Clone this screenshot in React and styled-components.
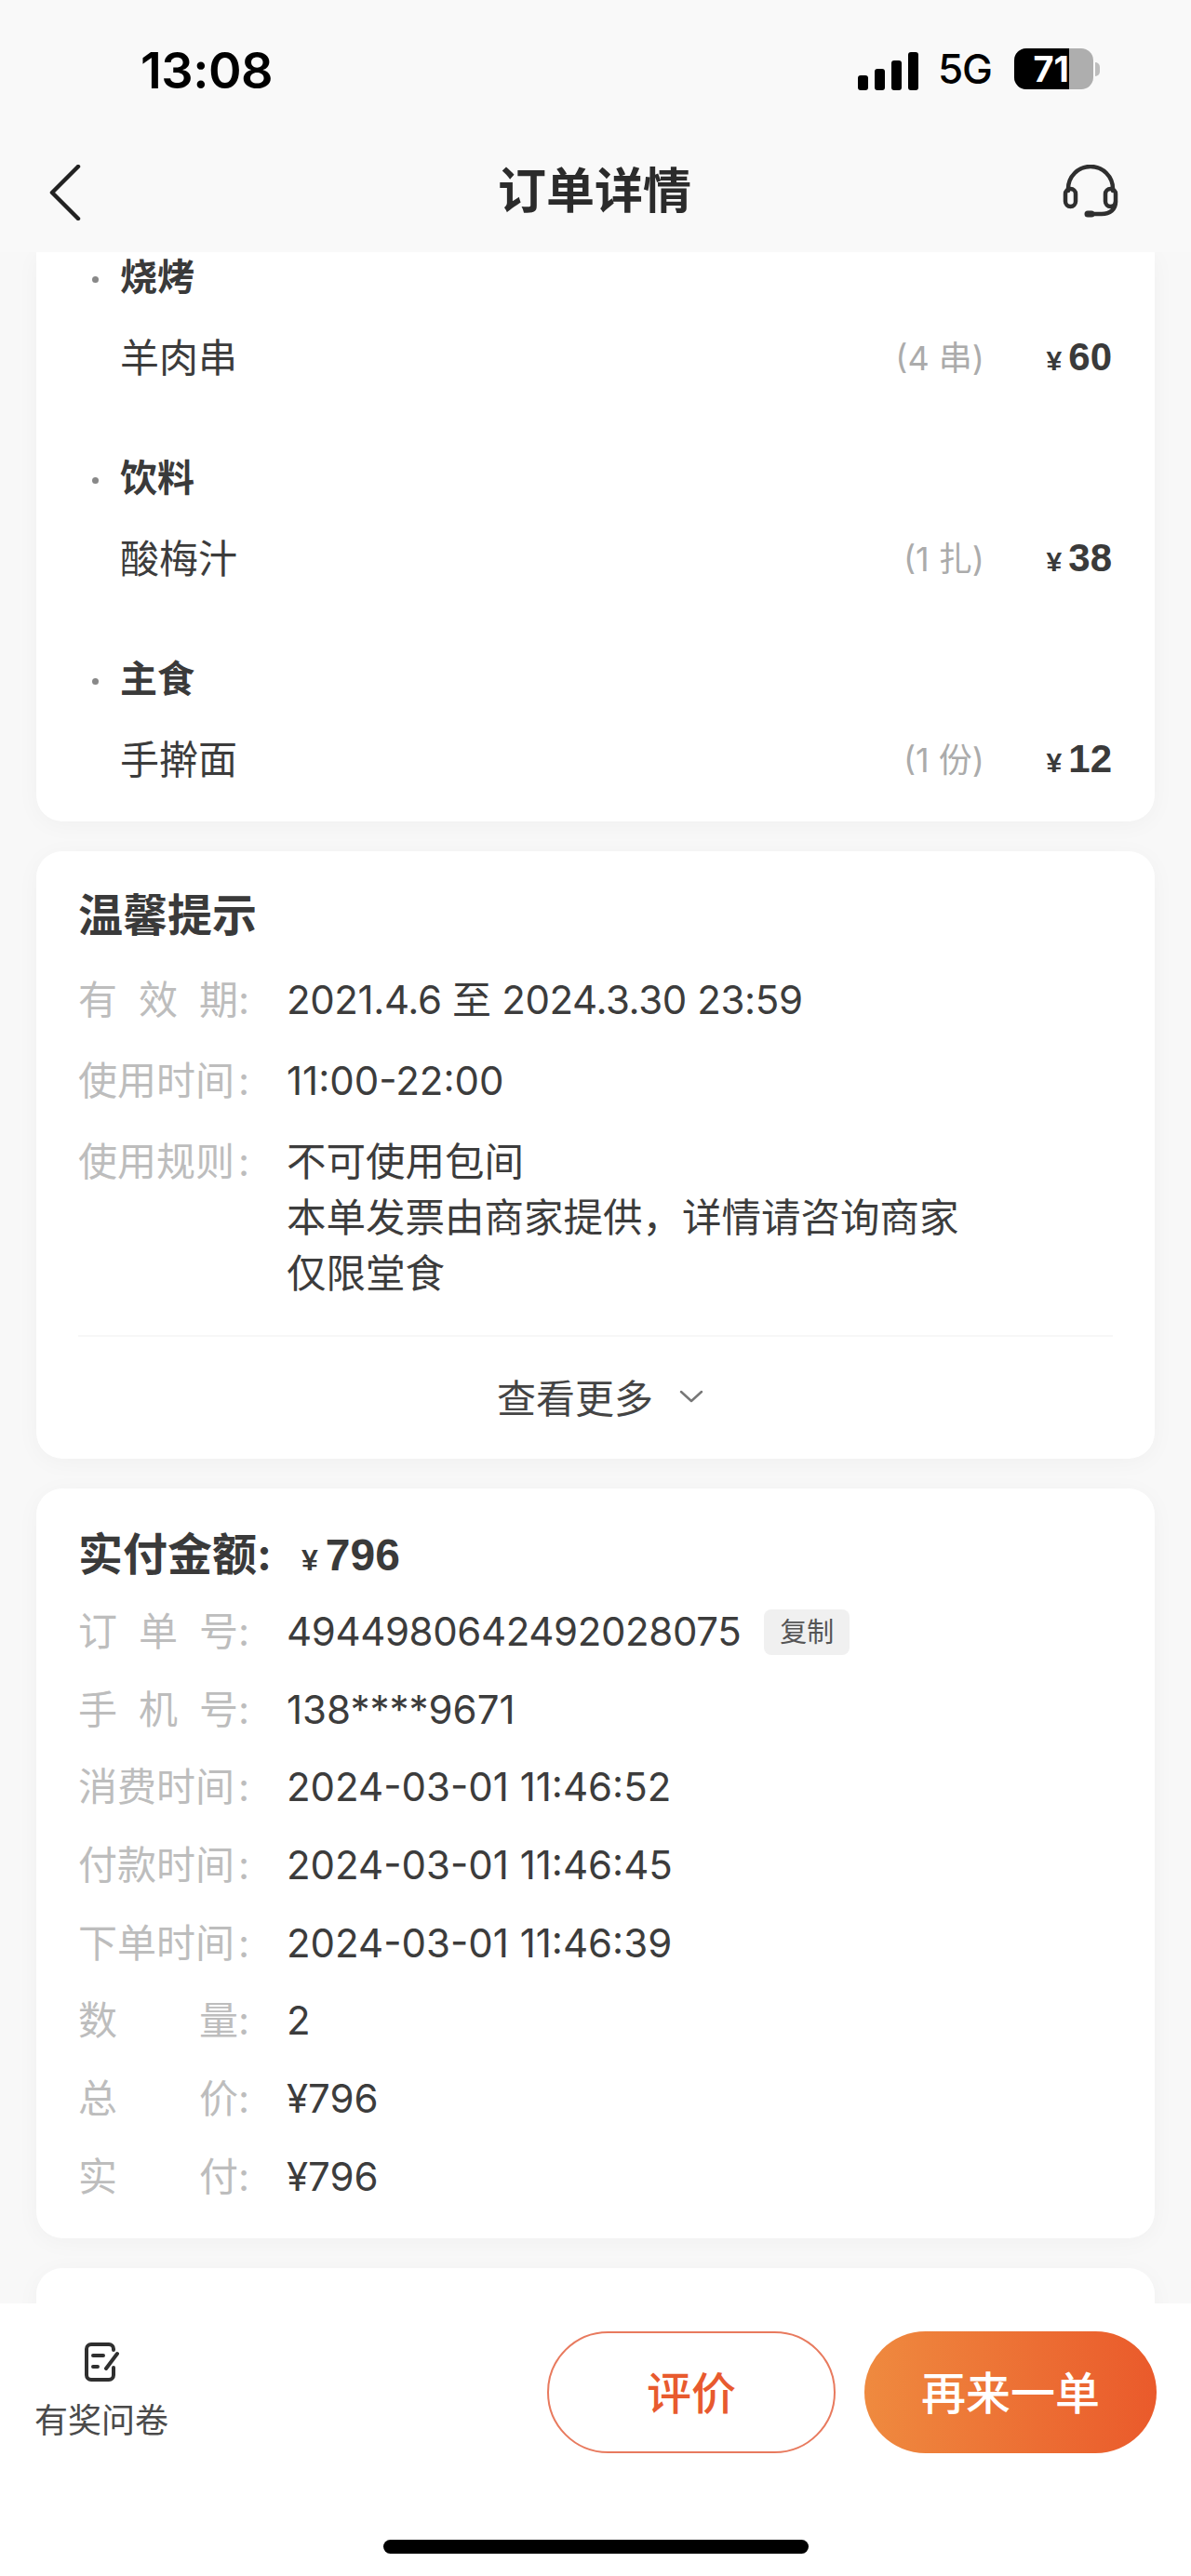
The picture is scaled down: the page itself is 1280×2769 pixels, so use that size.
import React from "react";
import styled, { createGlobalStyle } from "styled-components";

const Global = createGlobalStyle`
  html, body { margin: 0; padding: 0; background: #f8f8f8; }
  * { box-sizing: border-box; }
  body { font-family: Inter, "Noto Sans CJK SC", sans-serif; color: #333; }
`;
const Page = styled.div`
  width: 1280px; height: 2769px; display: flex; flex-direction: column; overflow: hidden; background: #f8f8f8;
`;
const StatusBar = styled.div`
  height: 150px; flex: none; padding: 50px 98px 0 151px; display: flex; justify-content: space-between; align-items: flex-start; background: #f9f9f9;
`;
const Clock = styled.div`
  font-size: 54px; line-height: 52px; font-weight: 600; color: #000; letter-spacing: -0.5px;
`;
const StatusRight = styled.div`
  display: flex; align-items: center; height: 54px; margin-top: -3px;
`;
const Bars = styled.div`
  display: flex; align-items: flex-end; gap: 7px; height: 41px; margin-top: 4px;
`;
const Bar = styled.i`
  display: block; width: 11px; height: ${p => p.$h}px; background: #000; border-radius: 3px;
`;
const Network = styled.span`
  margin-left: 21px; font-size: 44px; line-height: 44px; color: #000; font-weight: 500; letter-spacing: -1px;
`;
const Battery = styled.div`
  margin-left: 24px; position: relative; width: 85px; height: 44px; border-radius: 13px; overflow: hidden; background: #aeaeae;
`;
const BatteryFill = styled.div`
  width: 59px; height: 44px; background: #000; color: #fff; font-size: 38px; line-height: 44px; font-weight: 700; text-align: right; white-space: nowrap; overflow: hidden;
`;
const Nub = styled.i`
  display: block; width: 5px; height: 15px; margin-left: 2px; background: #bdbdbd; border-radius: 0 8px 8px 0;
`;
const Nav = styled.div`
  height: 121px; flex: none; position: relative; display: flex; align-items: flex-start; justify-content: space-between; padding: 27px 78px 0 53px; background: #f9f9f9;
`;
const NavTitle = styled.div`
  position: absolute; left: 0; right: 0; top: 26px; text-align: center; font-size: 52px; line-height: 60px; font-weight: 700; color: #2b2b2b; padding-right: 2px;
`;
const Scroll = styled.div`
  flex: 1; min-height: 0; overflow: hidden; padding: 0 39px; display: flex; flex-direction: column; gap: 32px; background: #f8f8f8;
`;
const Card = styled.section`
  flex: none; background: #fff; border-radius: ${p => (p.$flat ? "0 0 28px 28px" : "28px")}; box-shadow: 0 4px 26px rgba(0,0,0,.035); padding: ${p => p.$pad};
`;
const Group = styled.div`
  & + & { margin-top: 72px; }
`;
const GroupTitle = styled.div`
  position: relative; padding-left: 90px; font-size: 40px; line-height: 54px; font-weight: 700; color: #3a3a3a;
  &::before { content: ""; position: absolute; left: 60px; top: 26px; width: 7px; height: 7px; border-radius: 50%; background: #888; }
`;
const ItemRow = styled.div`
  margin-top: 30px; padding: 0 46px 0 90px; height: 60px; display: flex; align-items: center; font-size: 42px; line-height: 60px; color: #3c3c3c;
`;
const ItemName = styled.span`
  flex: 1;
`;
const Qty = styled.span`
  font-size: 36px; color: #ababab;
`;
const Price = styled.span`
  width: 137px; padding-top: 2px; text-align: right; font-family: "Liberation Sans", "Noto Sans CJK SC", sans-serif; font-weight: 700; font-size: 42px; color: #3a3a3a;
`;
const Yen = styled.span`
  font-size: ${p => p.$s || 30}px; margin-right: ${p => p.$m || 7}px; font-weight: 700;
`;
const CardTitle = styled.div`
  font-size: 48px; line-height: 60px; font-weight: 700; color: #3a3a3a; display: flex; align-items: baseline;
`;
const Amount = styled.span`
  margin-left: 32px; display: inline-flex; align-items: baseline; font-family: "Liberation Sans", "Noto Sans CJK SC", sans-serif;
`;
const Row = styled.div`
  display: flex; margin-top: ${p => p.$gap}px; font-size: 42px; line-height: 60px;
`;
const Label = styled.div`
  width: 224px; flex: none; display: flex; justify-content: flex-start; color: #bdbdbd;
`;
const LabelText = styled.span`
  width: ${p => (p.$wide ? 168 : 172)}px; margin-right: ${p => (p.$wide ? 4 : 0)}px; text-align-last: justify; white-space: nowrap;
`;
const Value = styled.div`
  display: flex; align-items: center; color: #3c3c3c; letter-spacing: ${p => (p.$tight ? "-0.38px" : "0")};
`;
const Lines = styled.div`
  color: #3c3c3c; font-size: 42.5px;
`;
const Copy = styled.span`
  margin-left: 25px; width: 92px; height: 49px; border-radius: 8px; background: #f0f0f0; color: #555; font-size: 29px; line-height: 49px; text-align: center; letter-spacing: 0;
`;
const Divider = styled.div`
  height: 2px; margin-top: 36px; background: #f7f7f7;
`;
const More = styled.div`
  height: 131px; display: flex; align-items: center; justify-content: center; gap: 28px; font-size: 42px; color: #444; padding: 0 0 4px 10px;
`;
const Footer = styled.div`
  flex: none; height: 293px; position: relative; background: #fff; padding: 30px 37px 0 37px; display: flex; align-items: flex-start; justify-content: space-between;
`;
const Survey = styled.div`
  margin-top: 12px; display: flex; flex-direction: column; align-items: center; font-size: 36px; line-height: 44px; color: #4a4a4a; gap: 20px;
`;
const Buttons = styled.div`
  display: flex; gap: 31px;
`;
const Button = styled.div`
  width: ${p => p.$w}px; height: 131px; border-radius: 66px; display: flex; align-items: center; justify-content: center; padding-bottom: 5px; font-size: 48px; font-weight: 500;
  color: ${p => (p.$primary ? "#fff" : "#e85a2e")};
  background: ${p => (p.$primary ? "linear-gradient(90deg,#ef8a3f,#ea5a2b)" : "#fff")};
  border: ${p => (p.$primary ? "none" : "2px solid #e87a5e")};
`;
const HomeBar = styled.div`
  position: absolute; left: 412px; top: 254px; width: 457px; height: 15px; border-radius: 8px; background: #000;
`;
const Stub = styled.div`
  height: 120px;
`;

const items = [
  { t: "烧烤", n: "羊肉串", q: "(4 串)", p: "60" },
  { t: "饮料", n: "酸梅汁", q: "(1 扎)", p: "38" },
  { t: "主食", n: "手擀面", q: "(1 份)", p: "12" },
];
const orderRows = [
  ["订单号", "4944980642492028075", true],
  ["手机号", "138****9671"],
  ["消费时间", "2024-03-01 11:46:52"],
  ["付款时间", "2024-03-01 11:46:45"],
  ["下单时间", "2024-03-01 11:46:39"],
  ["数量", "2"],
  ["总价", "¥796"],
  ["实付", "¥796"],
];

const FieldLabel = ({ text }) => {
  const wide = text.length >= 4;
  return (
    <Label>
      <LabelText $wide={wide}>{wide ? text : text.split("").join(" ")}</LabelText>:
    </Label>
  );
};

export default function App() {
  return (
    <Page>
      <Global />
      <StatusBar>
        <Clock>13:08</Clock>
        <StatusRight>
          <Bars>{[16, 23, 32, 41].map(h => <Bar key={h} $h={h} />)}</Bars>
          <Network>5G</Network>
          <Battery><BatteryFill>71</BatteryFill></Battery>
          <Nub />
        </StatusRight>
      </StatusBar>
      <Nav>
        <svg width="34" height="60" viewBox="0 0 34 60" fill="none" stroke="#222" strokeWidth="4.5" strokeLinecap="round" strokeLinejoin="round">
          <path d="M31 2 3 30l28 28" />
        </svg>
        <NavTitle>订单详情</NavTitle>
        <svg width="60" height="58" viewBox="0 0 60 58" fill="none" stroke="#2f2f2f" strokeWidth="4.5" strokeLinecap="round" strokeLinejoin="round">
          <path d="M6 28V26a24 24 0 0 1 48 0v2" />
          <rect x="3" y="26" width="11" height="19" rx="5.5" />
          <rect x="46" y="26" width="11" height="19" rx="5.5" />
          <path d="M57 40c0 8-6 13-15 13H30" />
          <path d="M27 53h4" strokeWidth="7" />
        </svg>
      </Nav>
      <Scroll>
        <Card $flat $pad="0 0 36px">
          {items.map(i => (
            <Group key={i.t}>
              <GroupTitle>{i.t}</GroupTitle>
              <ItemRow>
                <ItemName>{i.n}</ItemName>
                <Qty>{i.q}</Qty>
                <Price><Yen>¥</Yen>{i.p}</Price>
              </ItemRow>
            </Group>
          ))}
        </Card>
        <Card $pad="39px 45px 0">
          <CardTitle>温馨提示</CardTitle>
          <Row $gap={31}>
            <FieldLabel text="有效期" />
            <Value $tight>2021.4.6 至 2024.3.30 23:59</Value>
          </Row>
          <Row $gap={27}>
            <FieldLabel text="使用时间" />
            <Value>11:00-22:00</Value>
          </Row>
          <Row $gap={27}>
            <FieldLabel text="使用规则" />
            <Lines>不可使用包间<br />本单发票由商家提供，详情请咨询商家<br />仅限堂食</Lines>
          </Row>
          <Divider />
          <More>
            查看更多
            <svg width="26" height="14" viewBox="0 0 26 14" fill="none" stroke="#777" strokeWidth="2.5" strokeLinecap="round" strokeLinejoin="round"><path d="M2 2l11 10L24 2" /></svg>
          </More>
        </Card>
        <Card $pad="41px 45px 36px">
          <CardTitle>实付金额:<Amount><Yen $s={32} $m={8}>¥</Yen>796</Amount></CardTitle>
          {orderRows.map(([l, v, c], i) => (
            <Row key={l} $gap={i === 0 ? 17 : 23.7}>
              <FieldLabel text={l} />
              <Value $tight={c}>{v}{c && <Copy>复制</Copy>}</Value>
            </Row>
          ))}
        </Card>
        <Card $pad="0"><Stub /></Card>
      </Scroll>
      <Footer>
        <Survey>
          <svg width="38" height="42" viewBox="0 0 38 42" fill="none" stroke="#2f2f2f" strokeWidth="4" strokeLinecap="round" strokeLinejoin="round">
            <path d="M32 8V7a5 5 0 0 0-5-5H8a5 5 0 0 0-5 5v28a5 5 0 0 0 5 5h19a5 5 0 0 0 5-5v-8" />
            <path d="M10 14h11M10 26h5M36 12 24 28" />
          </svg>
          有奖问卷
        </Survey>
        <Buttons>
          <Button $w={310}>评价</Button>
          <Button $w={314} $primary>再来一单</Button>
        </Buttons>
        <HomeBar />
      </Footer>
    </Page>
  );
}
